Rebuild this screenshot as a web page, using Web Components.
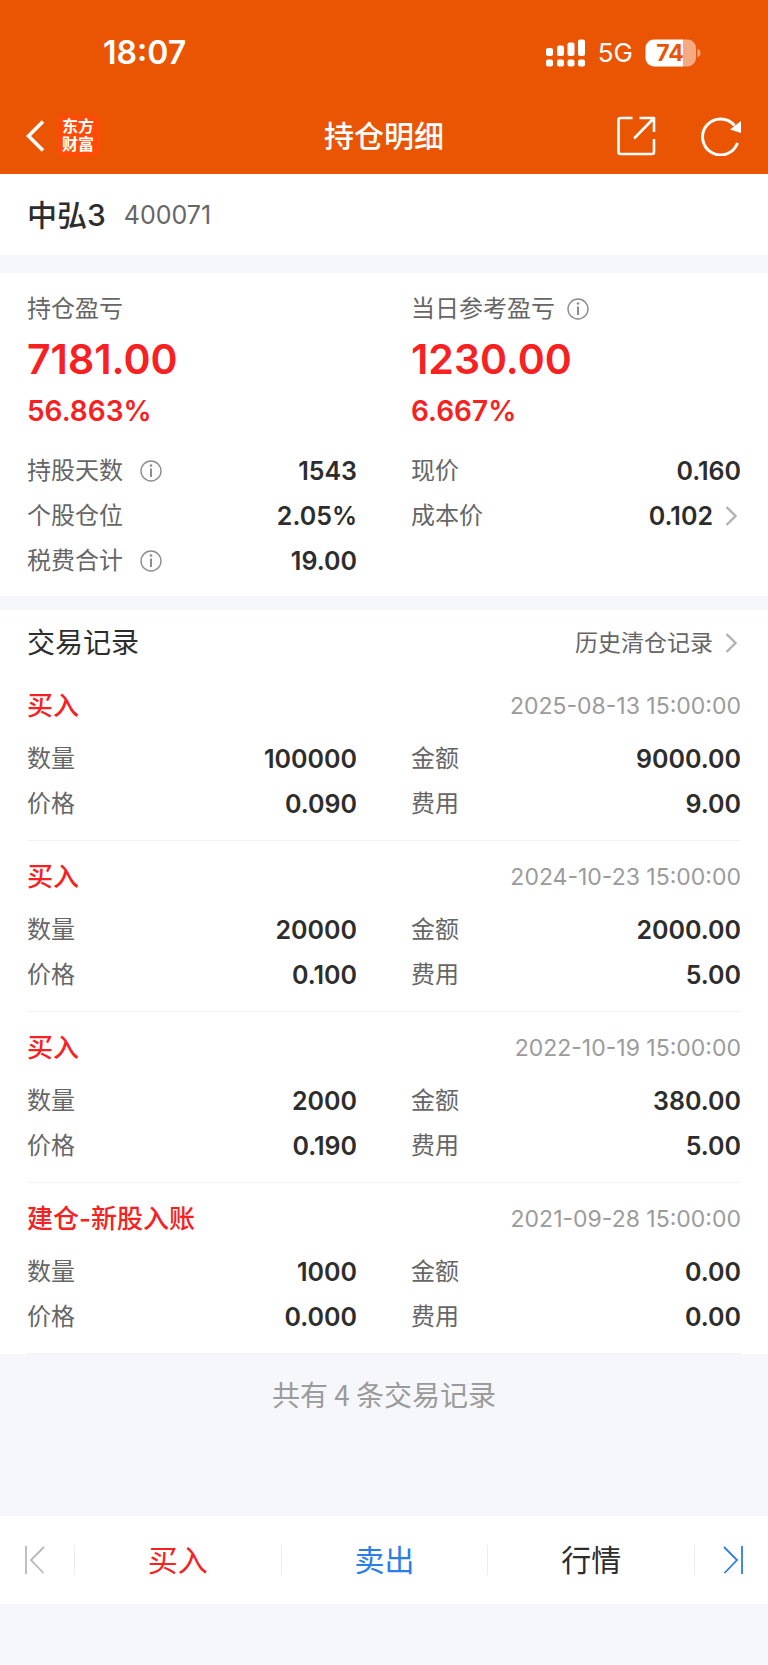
<!DOCTYPE html>
<html lang="zh-CN">
<head>
<meta charset="utf-8">
<meta name="viewport" content="width=device-width, initial-scale=1">
<title>持仓明细</title>
<style>
  html { background: #f6f7fa; }
  body {
    margin: 0;
    --accent: #ea5504;
    --red: #f82020;
    --blue: #2b7de9;
    --ink: #2d2d2d;
    --label: #666;
    --muted: #9b9b9b;
    --line: #f3f3f5;
    --gutter: 27px;
    font-family: Inter, "Noto Sans CJK SC", sans-serif;
    font-size: 25px;
    line-height: 40px;
    color: var(--ink);
  }
</style>
</head>
<body>
<position-page></position-page>

<script>
const define = (name, html, setup) => {
  const tpl = document.createElement('template');
  tpl.innerHTML = html;
  customElements.define(name, class extends HTMLElement {
    constructor() {
      super();
      this.attachShadow({ mode: 'open' }).append(tpl.content.cloneNode(true));
    }
    connectedCallback() { if (setup) setup(this, this.shadowRoot); }
  });
};

/* Phone status bar: clock, signal, network, battery */
define('status-bar', `
<style>
  :host { display: flex; align-items: center; justify-content: space-between; height: 106px;
          padding: 0 67px 0 103px; color: #fff; background: var(--accent); }
  time { font-size: 32px; font-weight: 600; }
  .right { display: flex; align-items: center; }
  .net { font-size: 26px; margin: 0 12px 0 13px; }
  .battery { display: grid; }
  .battery > * { grid-area: 1 / 1; }
  .level { width: 50px; line-height: 28px; text-align: center; font-size: 23px; font-weight: 700; color: var(--accent); }
  svg { display: block; }
</style>
<time>18:07</time>
<div class="right">
  <svg width="39" height="28" viewBox="0 0 39 28" fill="#fff" aria-hidden="true">
    <rect y="9" width="7" height="8" rx="2"/><rect x="11" y="6.500" width="7" height="10.500" rx="2"/>
    <rect x="21.500" y="3.500" width="7" height="13.500" rx="2"/><rect x="32" y="0.500" width="7" height="16.500" rx="2"/>
    <rect y="20.500" width="7" height="7" rx="2"/><rect x="11" y="20.500" width="7" height="7" rx="2"/>
    <rect x="21.500" y="20.500" width="7" height="7" rx="2"/><rect x="32" y="20.500" width="7" height="7" rx="2"/>
  </svg>
  <span class="net">5G</span>
  <div class="battery">
    <svg width="56" height="28" viewBox="0 0 56 28" aria-hidden="true">
      <path d="M9 .5H38V27.500H9A8.500 8.500 0 0 1 .5 19V9A8.500 8.500 0 0 1 9 .5Z" fill="#fff"/>
      <path d="M38 .5h4.500A8.500 8.500 0 0 1 51 9v10a8.500 8.500 0 0 1-8.500 8.500H38ZM52.500 10c4 1 4 7 0 8Z" fill="#fff" opacity=".5"/>
    </svg>
    <span class="level">74</span>
  </div>
</div>`);

/* Title bar with back, brand mark, share and refresh */
define('nav-bar', `
<style>
  :host { display: grid; grid-template-columns: 1fr auto 1fr; align-items: center;
          padding: 0 26px 8px; height: 60px; color: #fff; background: var(--accent); }
  h1 { margin: 0; font-size: 30px; font-weight: 500; }
  .side { display: flex; align-items: center; }
  .end { justify-content: flex-end; gap: 44px; }
  button { display: block; padding: 0; border: 0; background: none; color: inherit; }
  svg { display: block; }
  .brand { display: grid; align-content: center; justify-items: center; width: 42px; height: 42px; margin-left: 12px;
           border-radius: 8px; background: #ff4a08; font: 700 16px/18px "Liberation Sans", "Noto Sans CJK SC", sans-serif; }
</style>
<div class="side">
  <button aria-label="返回"><svg width="19" height="32" viewBox="0 0 19 32" fill="none" stroke="#fff" stroke-width="3.600"><path d="M17 1.500 2.500 16 17 30.500"/></svg></button>
  <div class="brand"><span>东方</span><span>财富</span></div>
</div>
<h1><slot></slot></h1>
<div class="side end">
  <button aria-label="分享"><svg width="40" height="40" viewBox="0 0 40 40" fill="none" stroke="#fff" stroke-width="2.600" stroke-linejoin="round"><path d="M16.500 2H4.500Q2.500 2 2.500 4V36Q2.500 38 4.500 38H36Q38 38 38 36V23M23.500 2H38V16M38 2 18 22.500"/></svg></button>
  <button aria-label="刷新"><svg width="42" height="40" viewBox="0 0 42 40" fill="none" stroke="#fff" stroke-width="3"><path d="M37.500 27A18 18 0 1 1 34.500 9.500"/><path d="M41 5V17L30 13.500Z" fill="#fff" stroke="none"/></svg></button>
</div>`);

/* Small round "i" help button */
define('info-tip', `
<style>
  :host { display: inline-flex; }
  button { display: block; padding: 0; border: 0; background: none; }
  svg { display: block; }
</style>
<button aria-label="说明"><svg width="22" height="22" viewBox="0 0 22 22" fill="none" stroke="#8c8c8c" stroke-width="1.400"><circle cx="11" cy="11" r="10"/><path d="M11 8.500V17" stroke-width="2"/><circle cx="11" cy="5.500" r="1.300" fill="#8c8c8c" stroke="none"/></svg></button>`);

define('chevron-icon', `
<style>:host { display: block; } svg { display: block; }</style>
<svg width="12" height="20" viewBox="0 0 12 20" fill="none" stroke="#b2b2b2" stroke-width="2.400" aria-hidden="true"><path d="M1.500 1 10.500 10 1.500 19"/></svg>`);

/* One label / value line */
define('data-row', `
<style>
  :host { display: flex; align-items: center; justify-content: space-between; height: 45px; }
  .label { display: flex; align-items: center; gap: 17px; font-size: 24px; color: var(--label); }
  .value { display: flex; align-items: center; gap: 12px; font-weight: 600; }
  ::slotted(chevron-icon) { margin-right: 4px; }
</style>
<div class="label"><slot name="label"></slot><slot name="tip"></slot></div>
<div class="value"><slot></slot><slot name="more"></slot></div>`);

/* Profit headline: caption, amount, percentage */
define('profit-figure', `
<style>
  :host { display: block; color: var(--red); }
  .caption { display: flex; align-items: center; gap: 12px; font-size: 24px; color: var(--label); }
  .amount { font-size: 41px; line-height: 60px; font-weight: 600; }
  .rate { font-size: 28px; line-height: 44px; font-weight: 600; }
</style>
<div class="caption"><slot></slot></div>
<div class="amount"><slot name="amount"></slot></div>
<div class="rate"><slot name="rate"></slot></div>`);

/* One trade */
define('trade-record', `
<style>
  :host { display: block; margin: 0 var(--gutter); padding: 16px 0 14px; border-bottom: 1px solid var(--line); }
  header { display: flex; justify-content: space-between; margin-bottom: 10px; }
  h3 { margin: 0; font-size: 26px; font-weight: 500; color: var(--red); }
  time { font-size: 23px; color: var(--muted); }
  .grid { display: grid; grid-template-columns: 1fr 1fr; column-gap: 54px; }
</style>
<header><h3></h3><time></time></header>
<div class="grid">
  <data-row><span slot="label">数量</span><span data-f="qty"></span></data-row>
  <data-row><span slot="label">金额</span><span data-f="amount"></span></data-row>
  <data-row><span slot="label">价格</span><span data-f="price"></span></data-row>
  <data-row><span slot="label">费用</span><span data-f="fee"></span></data-row>
</div>`, (el, root) => {
  root.querySelector('h3').textContent = el.getAttribute('kind');
  root.querySelector('time').textContent = el.getAttribute('time');
  root.querySelectorAll('[data-f]').forEach(s => { s.textContent = el.getAttribute(s.dataset.f); });
});

/* Bottom actions */
define('action-bar', `
<style>
  :host { display: grid; grid-template-columns: 74px 1fr 1fr 1fr 74px; align-items: center; height: 88px; background: #fff; }
  button { display: flex; align-items: center; justify-content: center; height: 30px; padding: 0; border: 0;
           background: none; font: inherit; font-size: 30px; color: var(--ink); }
  button + button { border-left: 1px solid #ececee; }
  .buy { color: var(--red); }
  .sell { color: var(--blue); }
  .prev { justify-content: flex-start; padding-left: 25px; }
  .next { justify-content: flex-end; padding-right: 25px; }
</style>
<button class="prev" aria-label="上一只" disabled><svg width="20" height="28" viewBox="0 0 20 28" fill="none" stroke="#b8b8b8" stroke-width="1.800"><path d="M1 0V28M19 1 6 14 18.500 27"/></svg></button>
<button class="buy">买入</button>
<button class="sell">卖出</button>
<button>行情</button>
<button class="next" aria-label="下一只"><svg width="20" height="28" viewBox="0 0 20 28" fill="none" stroke="#2b7de9" stroke-width="1.800"><path d="M19 0V28M1 1 14 14 1.500 27"/></svg></button>`);

define('position-page', `
<style>
  :host { display: flex; flex-direction: column; min-height: 100vh; }
  section { background: #fff; }
  .stock { display: flex; align-items: center; gap: 18px; height: 81px; padding: 0 var(--gutter); margin-bottom: 18px; }
  h2 { margin: 0; font-size: 30px; font-weight: 500; }
  .stock span { color: var(--label); }
  .summary { display: grid; grid-template-columns: 1fr 1fr; column-gap: 54px; padding: 16px var(--gutter) 13px; margin-bottom: 14px; }
  profit-figure { margin-bottom: 15px; }
  .heading { display: flex; justify-content: space-between; align-items: center; padding: 6px var(--gutter) 0; line-height: 54px; }
  .heading h2 { font-size: 28px; font-weight: 400; }
  a { display: flex; align-items: center; gap: 12px; padding-right: 4px; font-size: 23px; color: var(--label); text-decoration: none; }
  .total { margin: 0; padding: 20px 0 102px; text-align: center; font-family: "Noto Sans CJK SC", sans-serif; font-size: 28px; color: var(--muted); }
</style>
<status-bar></status-bar>
<nav-bar>持仓明细</nav-bar>
<main>
  <section class="stock"><h2>中弘3</h2><span>400071</span></section>
  <section class="summary">
    <profit-figure>持仓盈亏<span slot="amount">7181.00</span><span slot="rate">56.863%</span></profit-figure>
    <profit-figure>当日参考盈亏<info-tip></info-tip><span slot="amount">1230.00</span><span slot="rate">6.667%</span></profit-figure>
    <data-row><span slot="label">持股天数</span><info-tip slot="tip"></info-tip>1543</data-row>
    <data-row><span slot="label">现价</span>0.160</data-row>
    <data-row><span slot="label">个股仓位</span>2.05%</data-row>
    <data-row><span slot="label">成本价</span>0.102<chevron-icon slot="more"></chevron-icon></data-row>
    <data-row><span slot="label">税费合计</span><info-tip slot="tip"></info-tip>19.00</data-row>
  </section>
  <section>
    <div class="heading"><h2>交易记录</h2><a href="#history">历史清仓记录<chevron-icon></chevron-icon></a></div>
    <trade-record kind="买入" time="2025-08-13 15:00:00" qty="100000" amount="9000.00" price="0.090" fee="9.00"></trade-record>
    <trade-record kind="买入" time="2024-10-23 15:00:00" qty="20000" amount="2000.00" price="0.100" fee="5.00"></trade-record>
    <trade-record kind="买入" time="2022-10-19 15:00:00" qty="2000" amount="380.00" price="0.190" fee="5.00"></trade-record>
    <trade-record kind="建仓-新股入账" time="2021-09-28 15:00:00" qty="1000" amount="0.00" price="0.000" fee="0.00"></trade-record>
  </section>
  <p class="total">共有 4 条交易记录</p>
</main>
<action-bar></action-bar>`);
</script>
</body>
</html>
